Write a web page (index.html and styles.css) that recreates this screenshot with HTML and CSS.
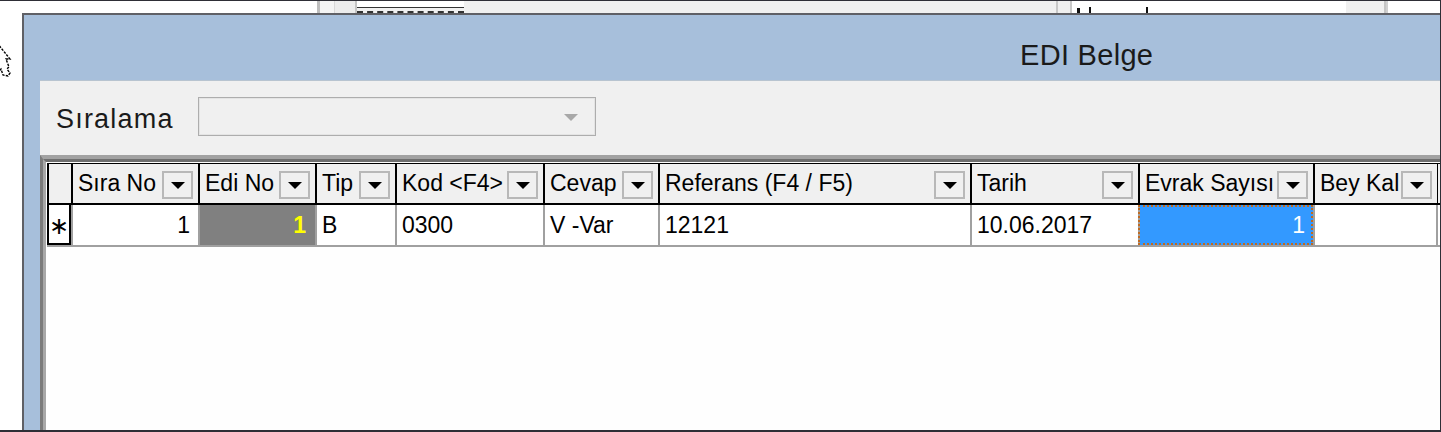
FILE: index.html
```html
<!DOCTYPE html>
<html lang="tr">
<head>
<meta charset="utf-8">
<title>EDI Belge</title>
<link rel="stylesheet" href="styles.css">
</head>
<body>
<div class="screen">
  <div class="bgbar">
    <div class="seg seg-a"></div>
    <div class="seg seg-b"></div>
    <div class="seg seg-c"></div>
    <div class="seg seg-d"></div>
    <div class="seg seg-tab"></div>
    <div class="seg seg-e"></div>
    <div class="seg seg-f"></div>
    <div class="seg seg-g"><span class="tick t1"></span><span class="tick t2"></span><span class="tick t3"></span></div>
    <div class="seg seg-h"></div>
    <div class="seg seg-i"></div>
  </div>
  <div class="main">
    <div class="desk-left">
      <svg class="cursor" width="16" height="44" viewBox="0 0 16 44">
        <path d="M0 2 L13 18 L9 18 L12 26 L10 28 L13 32 L11 35 L6 34 L4 28 L0 32" fill="#fff" stroke="#000" stroke-width="1.4" stroke-dasharray="2.5 1.2"/>
      </svg>
    </div>
    <div class="window">
      <div class="titlebar"><span class="title">EDI Belge</span></div>
      <div class="client">
        <div class="toolbar">
          <span class="lbl">Sıralama</span>
          <div class="combo"><span class="combo-arrow"></span></div>
        </div>
        <div class="grid">
          <div class="grid-inner">
            <div class="row head">
              <div class="hc ind"></div>
              <div class="hc"><span>Sıra No</span><i class="dd"></i></div>
              <div class="hc"><span>Edi No</span><i class="dd"></i></div>
              <div class="hc"><span>Tip</span><i class="dd"></i></div>
              <div class="hc"><span>Kod &lt;F4&gt;</span><i class="dd"></i></div>
              <div class="hc"><span>Cevap</span><i class="dd"></i></div>
              <div class="hc"><span>Referans (F4 / F5)</span><i class="dd"></i></div>
              <div class="hc"><span>Tarih</span><i class="dd"></i></div>
              <div class="hc"><span>Evrak Sayısı</span><i class="dd"></i></div>
              <div class="hc"><span>Bey Kal</span><i class="dd"></i></div>
            </div>
            <div class="row data">
              <div class="dc ind">∗</div>
              <div class="dc num">1</div>
              <div class="dc num ro">1</div>
              <div class="dc">B</div>
              <div class="dc">0300</div>
              <div class="dc">V -Var</div>
              <div class="dc">12121</div>
              <div class="dc">10.06.2017</div>
              <div class="dc num sel">1</div>
              <div class="dc"></div>
            </div>
          </div>
        </div>
      </div>
    </div>
  </div>
</div>
</body>
</html>
```

FILE: styles.css
```css
* { box-sizing: border-box; }
html, body { margin: 0; padding: 0; }
body {
  width: 1441px;
  height: 432px;
  overflow: hidden;
  background: #ffffff;
  font-family: "Liberation Sans", Arial, sans-serif;
  color: #000;
}
.screen {
  width: 1441px;
  height: 432px;
  border-top: 1px solid #2e2e36;
  border-right: 1px solid #2e2e36;
  border-bottom: 2px solid #2e2e36;
  display: flex;
  flex-direction: column;
  overflow: hidden;
}
.bgbar {
  height: 12px;
  display: flex;
  flex: none;
}
.seg { height: 12px; flex: none; position: relative; }
.seg-a { width: 317px; background: #fff; }
.seg-b { width: 3px; background: #bdbdbd; }
.seg-c { width: 15px; background: #f4f4f4; border-right: 1px solid #d8d8d8; }
.seg-d { width: 22px; background: #ececec; border-right: 2px solid #c4c4c4; }
.seg-tab {
  width: 107px;
  background: #f0f0f0;
  border-bottom: 2px dashed #333;
  margin-top: 6px;
  height: 6px;
  border-top: 1px solid #333;
}
.seg-e { width: 592px; background: #f0f0f0; }
.seg-f { width: 16px; background: #efefef; border-left: 2px solid #c8c8c8; border-right: 2px solid #c8c8c8; }
.seg-g { width: 274px; background: #fff; }
.tick { position: absolute; bottom: 0; width: 2px; height: 6px; background: #111; }
.t1 { left: 5px; width: 3px; height: 5px; }
.t2 { left: 17px; }
.t3 { left: 74px; }
.seg-h { width: 40px; background: #f0f0f0; border-right: 2px solid #c4c4c4; }
.seg-i { flex: 1; background: #fff; border-left: 2px solid #d0d0d0; }

.main {
  flex: 1;
  display: flex;
  min-height: 0;
}
.desk-left {
  width: 22px;
  flex: none;
  background: #fff;
  position: relative;
}
.cursor { position: absolute; left: -3px; top: 28px; }

.window {
  flex: 1;
  display: flex;
  flex-direction: column;
  background: #a7bfdb;
  border-top: 2px solid #5f6066;
  border-left: 2px solid #5f6066;
  min-width: 0;
}
.titlebar {
  height: 65px;
  flex: none;
  padding-left: 996px;
  display: flex;
  align-items: center;
  padding-top: 16px;
}
.title {
  font-size: 29px;
  color: #1a1a1a;
  letter-spacing: 0.3px;
}
.client {
  flex: 1;
  margin-left: 16px;
  background: #f0f0f0;
  display: flex;
  flex-direction: column;
  min-height: 0;
  border-top: 1px solid #b8c4d0;
}
.toolbar {
  height: 74px;
  flex: none;
  display: flex;
  align-items: center;
  padding-left: 16px;
  padding-bottom: 3px;
}
.lbl {
  font-size: 27px;
  width: 142px;
  letter-spacing: 1.2px;
  color: #1a1a1a;
  padding-top: 5px;
}
.combo {
  width: 398px;
  height: 39px;
  border: 1px solid #adadad;
  background: #f0f0f0;
  position: relative;
  box-shadow: inset 0 0 0 1px #e4e4e4;
}
.combo-arrow {
  position: absolute;
  right: 17px;
  top: 16px;
  border-left: 7px solid transparent;
  border-right: 7px solid transparent;
  border-top: 7px solid #a8a8a8;
}

.grid {
  flex: 1;
  border-top: 4px solid #a2a2a2;
  border-left: 3px solid #7b7b7b;
  background: #fefefe;
  min-height: 0;
}
.grid-inner {
  border-top: 3px solid #6f6f6f;
  border-left: 3px solid #a8a8a8;
  height: 100%;
  padding-top: 1px;
  padding-left: 1px;
}
.row {
  display: grid;
  grid-template-columns: 24px 127px 117px 80px 148px 115px 312px 168px 175px 125px;
}
.head {
  height: 42px;
  background: #f0f0f0;
  border-top: 1px solid #000;
  border-bottom: 2px solid #000;
}
.hc {
  display: flex;
  align-items: center;
  border-left: 2px solid #000;
  padding-left: 5px;
  padding-right: 5px;
  font-size: 23px;
  white-space: nowrap;
  overflow: hidden;
}
.hc span { flex: 1; overflow: hidden; }
.hc:last-child { border-right: 1px solid #000; }
.hc.ind { border-left: 2px solid #000; }
.dd {
  flex: none;
  width: 31px;
  height: 28px;
  border: 2px solid #b8b8b8;
  background: #f0f0f0;
  position: relative;
  margin-top: 2px;
}
.dd::after {
  content: "";
  position: absolute;
  left: 7px;
  top: 9px;
  border-left: 7px solid transparent;
  border-right: 7px solid transparent;
  border-top: 7px solid #000;
}
.data {
  height: 42px;
  background: #fff;
  border-bottom: 2px solid #a0a0a0;
}
.dc {
  display: flex;
  align-items: center;
  border-left: 2px solid #a0a0a0;
  padding-left: 5px;
  padding-right: 8px;
  font-size: 23px;
  white-space: nowrap;
  overflow: hidden;
}
.dc:last-child { border-right: 2px solid #a0a0a0; }
.dc.ind {
  border: 2px solid #000;
  border-top: none;
  justify-content: center;
  padding: 4px 0 0 0;
  font-family: "DejaVu Sans", sans-serif;
  font-size: 24px;
}
.dc.num { justify-content: flex-end; }
.dc.ro {
  background: #808080;
  color: #ffff00;
  font-weight: bold;
  padding-right: 9px;
}
.dc.sel {
  background: #3399ff;
  color: #ffffff;
  outline: 2px dotted #c06a20;
  outline-offset: -2px;
}
```
